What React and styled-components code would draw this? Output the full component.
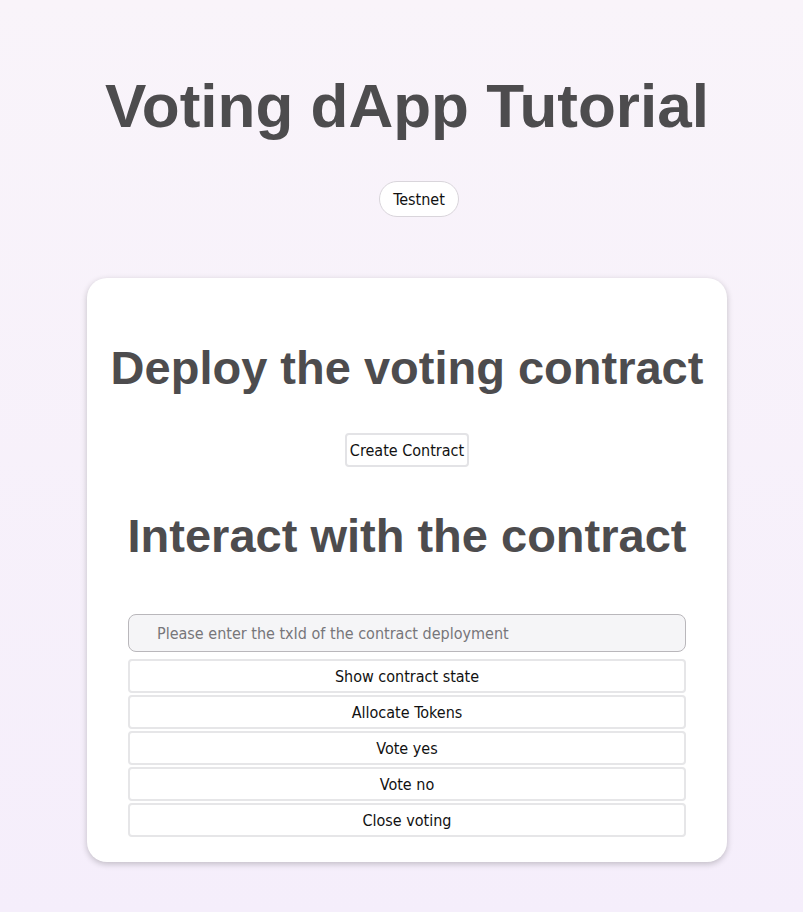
import React from "react";
import styled, { createGlobalStyle } from "styled-components";

const GlobalStyle = createGlobalStyle`
  html, body {
    margin: 0;
    padding: 0;
  }
  body {
    min-height: 100vh;
    background: linear-gradient(180deg, #f9f4fa 0%, #f5eefb 100%);
    font-family: "DejaVu Sans Condensed", "DejaVu Sans", sans-serif;
  }
`;

const actions = [
  "Show contract state",
  "Allocate Tokens",
  "Vote yes",
  "Vote no",
  "Close voting",
];

function App() {
  return (
    <>
      <GlobalStyle />
      <Page>
        <Header>
          <Title>Voting dApp Tutorial</Title>
          <NetworkPill>Testnet</NetworkPill>
        </Header>
        <Card>
          <Heading>Deploy the voting contract</Heading>
          <SmallButton>Create Contract</SmallButton>
          <Heading $top={41}>Interact with the contract</Heading>
          <Form>
            <TxInput placeholder="Please enter the txId of the contract deployment" />
            {actions.map((label) => (
              <WideButton key={label}>{label}</WideButton>
            ))}
          </Form>
        </Card>
      </Page>
    </>
  );
}

export default App;

const Page = styled.div`
  width: 814px;
  display: flex;
  flex-direction: column;
  align-items: center;
  padding-bottom: 50px;
`;

const Header = styled.header`
  display: flex;
  flex-direction: column;
  align-items: center;
  padding-top: 70px;
`;

const Title = styled.h1`
  margin: 0;
  font-family: "Liberation Sans", Arial, sans-serif;
  font-weight: 700;
  font-size: 62px;
  color: #4d4c4e;
  white-space: nowrap;
`;

const NetworkPill = styled.div`
  margin-top: 40px;
  margin-left: 24px;
  height: 34px;
  padding: 0 13px;
  display: flex;
  align-items: center;
  border: 1px solid #d9d5db;
  border-radius: 18px;
  background: #ffffff;
  font-size: 16px;
  color: #111;
`;

const Card = styled.main`
  margin-top: 61px;
  width: 640px;
  box-sizing: border-box;
  padding: 62px 0 25px;
  background: #ffffff;
  border-radius: 20px;
  box-shadow: 0 2px 6px rgba(0, 0, 0, 0.22);
  display: flex;
  flex-direction: column;
  align-items: center;
`;

const Heading = styled.h2`
  margin: ${(p) => p.$top || 0}px 0 0;
  font-family: "Liberation Sans", Arial, sans-serif;
  font-weight: 700;
  font-size: 47px;
  color: #4d4c4e;
  white-space: nowrap;
  text-align: center;
`;

const SmallButton = styled.button`
  margin-top: 38px;
  height: 34px;
  padding: 0 3px;
  border: 2px solid #e3e3e6;
  border-radius: 4px;
  background: #ffffff;
  font-family: "DejaVu Sans Condensed", "DejaVu Sans", sans-serif;
  font-size: 16px;
  color: #111;
`;

const Form = styled.div`
  margin-top: 51px;
  width: 558px;
  display: flex;
  flex-direction: column;
  gap: 2px;
`;

const TxInput = styled.input`
  height: 38px;
  box-sizing: border-box;
  margin-bottom: 5px;
  padding: 0 28px;
  border: 1px solid #b9b7bb;
  border-radius: 8px;
  background: #f5f5f7;
  font-family: "DejaVu Sans Condensed", "DejaVu Sans", sans-serif;
  font-size: 16px;
  color: #333;
  outline: none;

  &::placeholder {
    color: #77767a;
  }
`;

const WideButton = styled.button`
  height: 34px;
  width: 100%;
  border: 2px solid #e6e6e8;
  border-radius: 4px;
  background: #ffffff;
  font-family: "DejaVu Sans Condensed", "DejaVu Sans", sans-serif;
  font-size: 16px;
  color: #111;
`;
